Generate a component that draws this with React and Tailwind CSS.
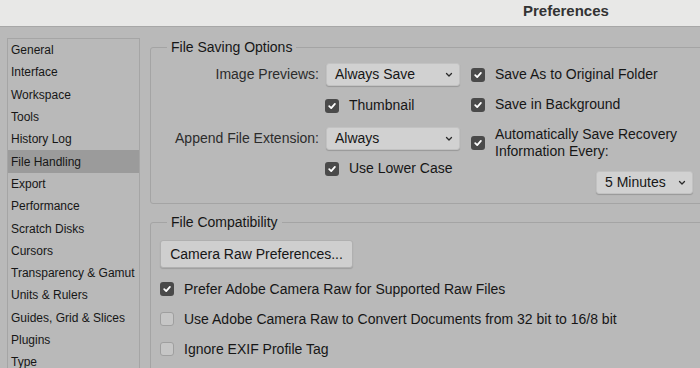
const navItems = [
  "General",
  "Interface",
  "Workspace",
  "Tools",
  "History Log",
  "File Handling",
  "Export",
  "Performance",
  "Scratch Disks",
  "Cursors",
  "Transparency & Gamut",
  "Units & Rulers",
  "Guides, Grid & Slices",
  "Plugins",
  "Type",
];

const Chevron = () => (
  <svg width="8" height="6" viewBox="0 0 8 6" className="shrink-0">
    <path d="M1.5 1.5 L4 4 L6.5 1.5" fill="none" stroke="#2a2a2a" strokeWidth="1.3" strokeLinecap="round" strokeLinejoin="round" />
  </svg>
);

const Checkbox = ({ checked }) =>
  checked ? (
    <div className="w-[14px] h-[14px] rounded-[3px] bg-[#4a4a4a] flex items-center justify-center shrink-0">
      <svg width="10" height="10" viewBox="0 0 10 10">
        <path d="M2.2 5.2 L4.2 7.1 L7.9 2.9" fill="none" stroke="#ffffff" strokeWidth="1.8" strokeLinecap="round" strokeLinejoin="round" />
      </svg>
    </div>
  ) : (
    <div className="w-[14px] h-[14px] rounded-[3px] bg-[#c6c6c6] border border-[#9f9f9f] shrink-0" />
  );

const Select = ({ value, className }) => (
  <div
    className={`h-[23px] rounded-[3px] bg-[#d1d1d1] border border-[#c2c2c2] shadow-[0_1px_1px_rgba(0,0,0,0.18)] flex items-center justify-between pl-[8px] pr-[6px] text-[14px] text-[#161616] ${className}`}>
    <span>{value}</span>
    <Chevron />
  </div>
);

const App = () => {
  return (
    <div className="w-[700px] h-[368px] overflow-hidden bg-[#b9b9b9] flex flex-col font-['Liberation_Sans',Arial,sans-serif] text-[#161616]">
      <div className="h-[27px] shrink-0 bg-[#e8e8e7] border-b border-[#a7a7a7] pl-[523px] pb-[6px] flex items-center">
        <span className="text-[15px] font-bold text-[#333333] leading-[15px]">Preferences</span>
      </div>
      <div className="flex flex-1 pl-[7px] pt-[11px] min-h-0">
        <div className="w-[133px] shrink-0 border border-[#a5a5a5] border-b-0 flex flex-col">
          {navItems.map((item) => (
            <div
              key={item}
              className={`h-[22.3px] shrink-0 flex items-center pl-[3px] text-[12px] whitespace-nowrap ${item === "File Handling" ? "bg-[#9b9b9b]" : ""}`}>
              {item}
            </div>
          ))}
        </div>
        <div className="ml-[10px] w-[600px] shrink-0 flex flex-col pt-[1px]">
          <fieldset className="border border-[#a4a4a4] rounded-[3px] pb-[9px]">
            <legend className="ml-[16px] px-[4px] text-[14px] leading-[16px] text-[#161616]">File Saving Options</legend>
            <div className="flex pt-[8px]">
              <div className="flex flex-col w-[309px] shrink-0">
                <div className="flex items-center h-[23px]">
                  <span className="w-[169px] text-right text-[14px] text-[#2c2c2c] pr-[1px] whitespace-nowrap">Image Previews:</span>
                  <Select value="Always Save" className="ml-[6px] w-[134px]" />
                </div>
                <div className="flex items-center h-[23px] mt-[8px] pl-[174px] gap-[10px]">
                  <Checkbox checked />
                  <span className="text-[14px]">Thumbnail</span>
                </div>
                <div className="flex items-center h-[23px] mt-[10px]">
                  <span className="w-[169px] text-right text-[14px] text-[#2c2c2c] pr-[1px] whitespace-nowrap">Append File Extension:</span>
                  <Select value="Always" className="ml-[6px] w-[134px]" />
                </div>
                <div className="flex items-center h-[23px] mt-[7px] pl-[174px] gap-[10px]">
                  <Checkbox checked />
                  <span className="text-[14px]">Use Lower Case</span>
                </div>
              </div>
              <div className="flex flex-col w-[222px] ml-[11px] shrink-0">
                <div className="flex items-center h-[23px] gap-[10px]">
                  <Checkbox checked />
                  <span className="text-[14px] whitespace-nowrap">Save As to Original Folder</span>
                </div>
                <div className="flex items-center h-[23px] mt-[7px] gap-[10px]">
                  <Checkbox checked />
                  <span className="text-[14px] whitespace-nowrap">Save in Background</span>
                </div>
                <div className="flex items-center mt-[10px] gap-[10px]">
                  <Checkbox checked />
                  <span className="text-[14px] leading-[17px] whitespace-nowrap">
                    Automatically Save Recovery
                    <br />
                    Information Every:
                  </span>
                </div>
                <div className="flex justify-end mt-[11px]">
                  <Select value="5 Minutes" className="w-[97px]" />
                </div>
              </div>
            </div>
          </fieldset>
          <fieldset className="border border-[#a4a4a4] rounded-[3px] mt-[10px] pb-[20px]">
            <legend className="ml-[16px] px-[4px] text-[14px] leading-[16px] text-[#161616]">File Compatibility</legend>
            <div className="flex flex-col pt-[10px] pl-[9px]">
              <div className="w-[193px] h-[28px] rounded-[3px] bg-[#cfcfcf] border border-[#b0b0b0] shadow-[0_1px_1px_rgba(0,0,0,0.15)] flex items-center justify-center text-[14px]">
                Camera Raw Preferences...
              </div>
              <div className="flex items-center h-[30px] mt-[6px] gap-[10px]">
                <Checkbox checked />
                <span className="text-[14px]">Prefer Adobe Camera Raw for Supported Raw Files</span>
              </div>
              <div className="flex items-center h-[30px] gap-[10px]">
                <Checkbox />
                <span className="text-[14px]">Use Adobe Camera Raw to Convert Documents from 32 bit to 16/8 bit</span>
              </div>
              <div className="flex items-center h-[30px] gap-[10px]">
                <Checkbox />
                <span className="text-[14px]">Ignore EXIF Profile Tag</span>
              </div>
            </div>
          </fieldset>
        </div>
      </div>
    </div>
  );
};

export default App;
